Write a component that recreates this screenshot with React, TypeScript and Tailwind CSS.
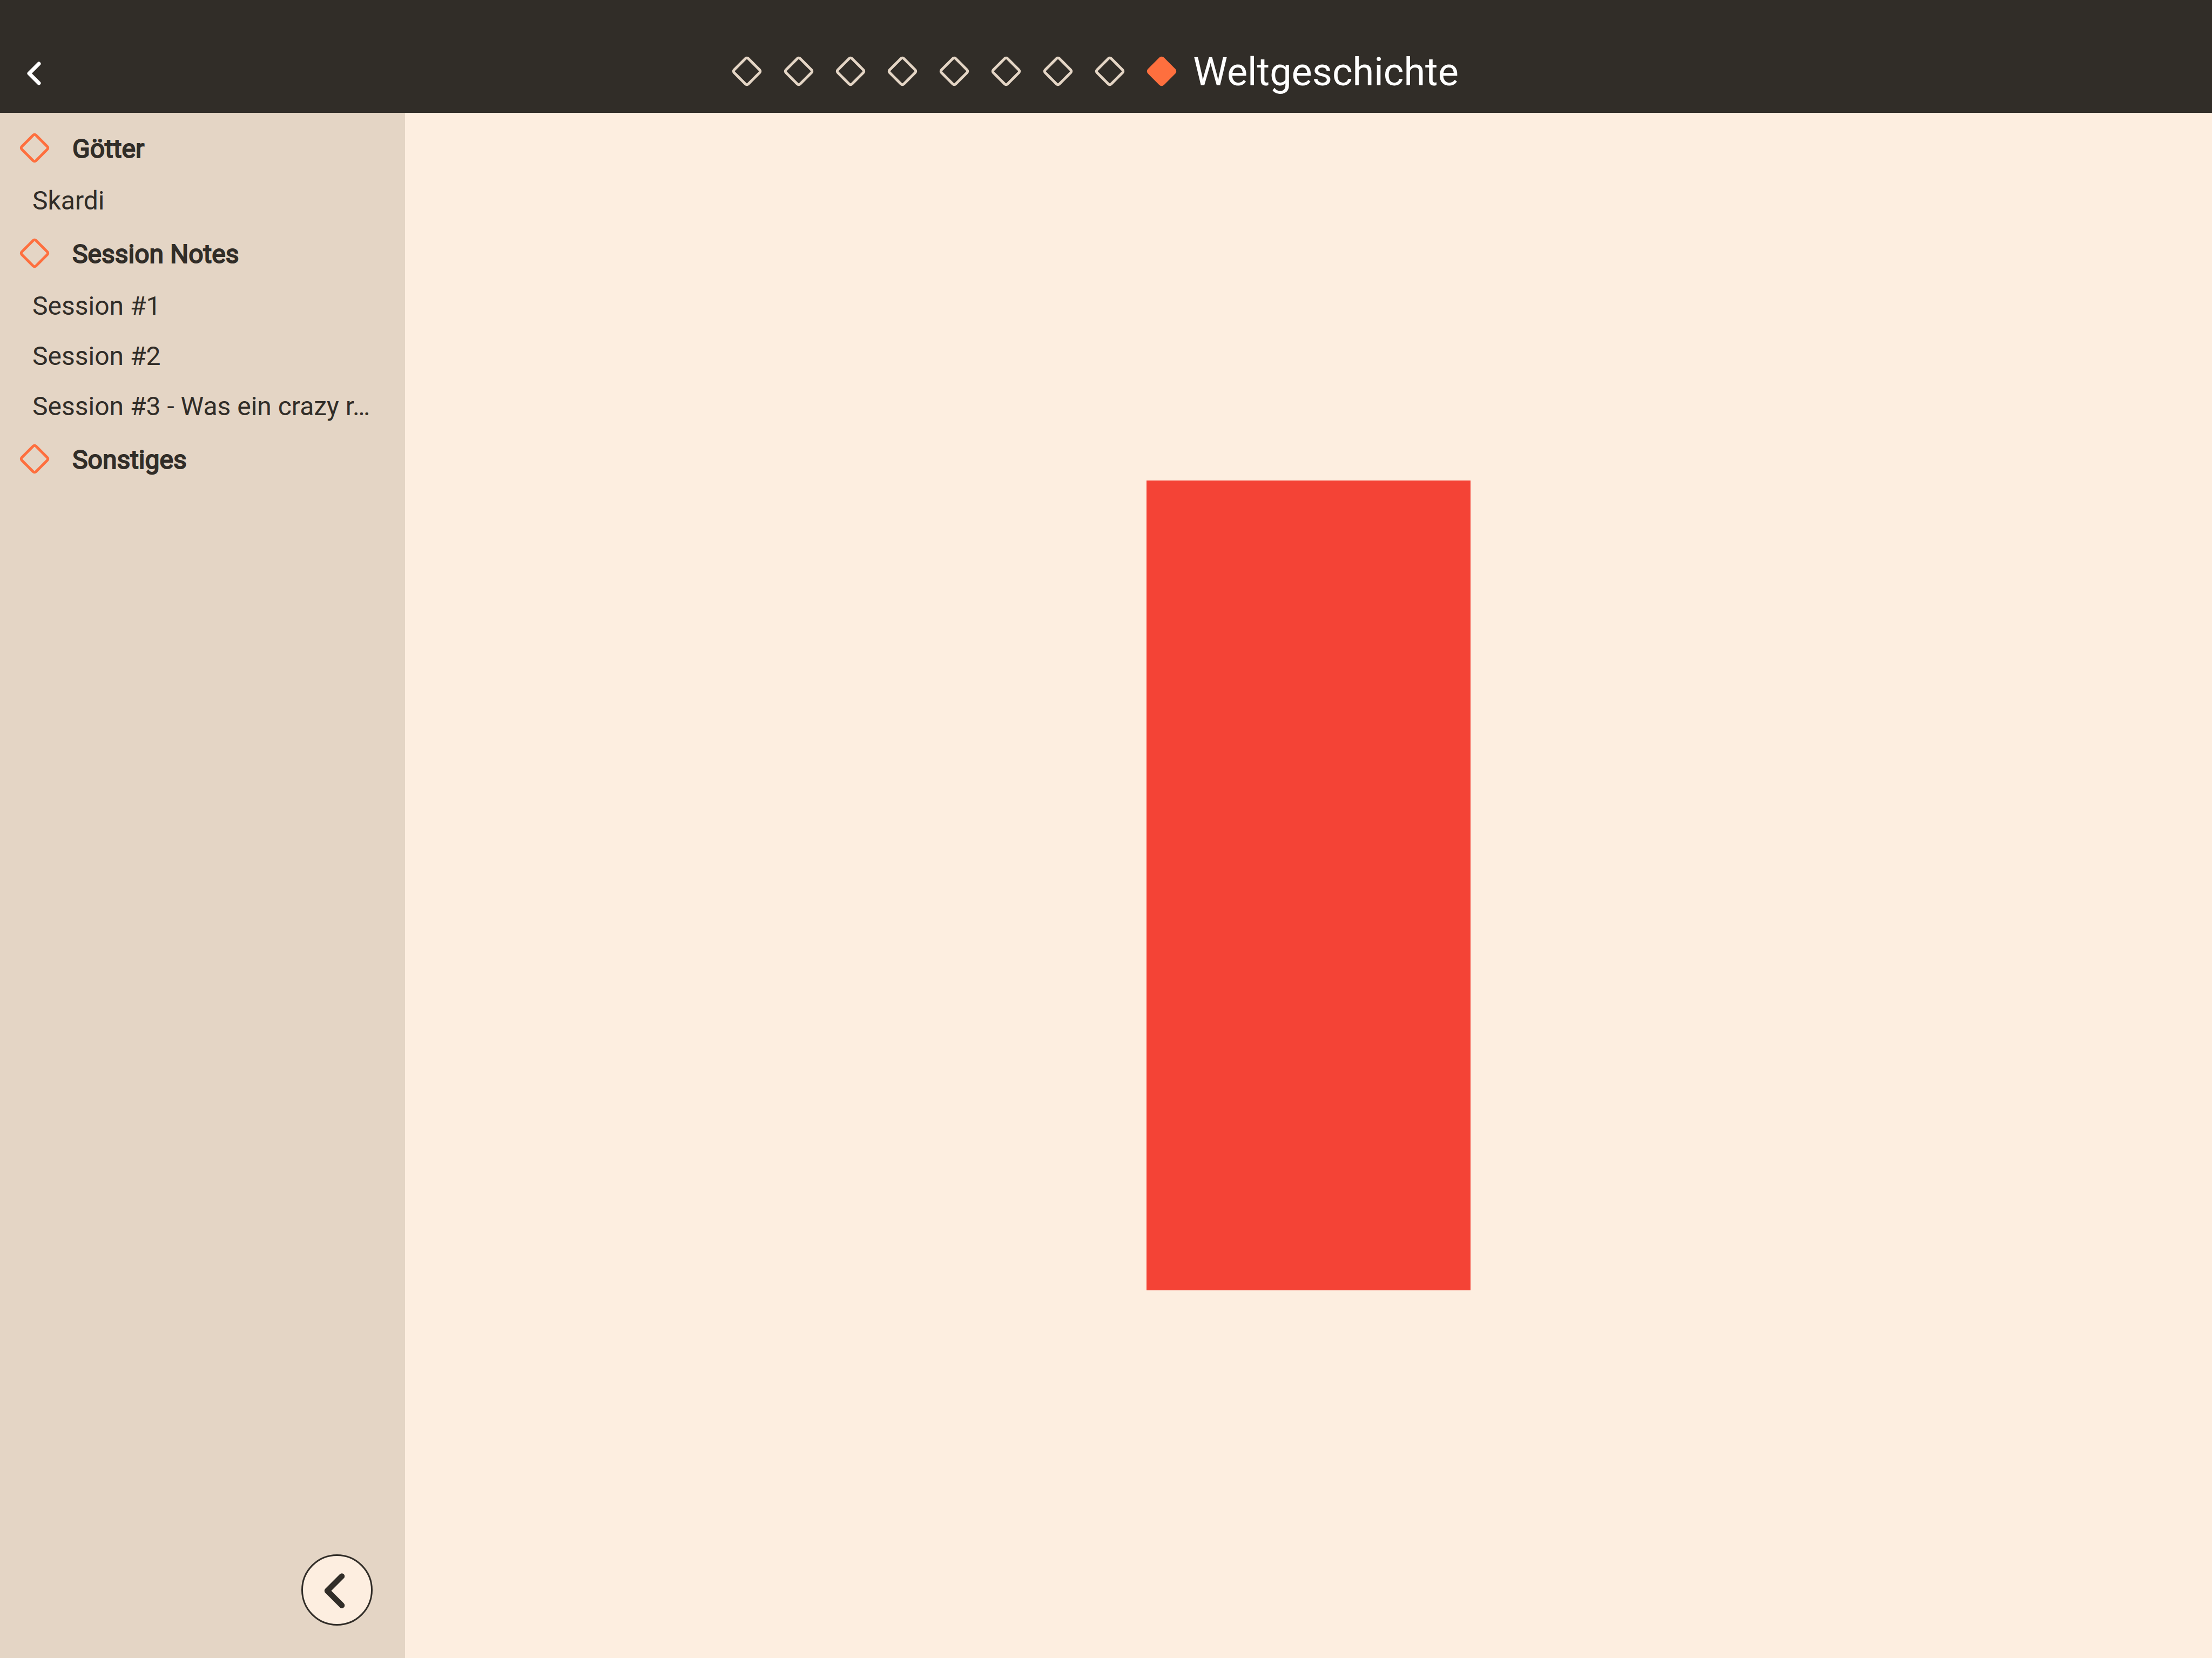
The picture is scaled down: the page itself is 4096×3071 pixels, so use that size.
import React from "react";

type DiamondProps = { className: string; filled?: boolean };

function Diamond({ className, filled = false }: DiamondProps) {
  return (
    <svg viewBox="0 0 96 96" className={className} aria-hidden="true">
      <rect
        x="29.5"
        y="29.5"
        width="37"
        height="37"
        rx="3.5"
        transform="rotate(45 48 48)"
        fill={filled ? "currentColor" : "none"}
        stroke="currentColor"
        strokeWidth="5"
      />
    </svg>
  );
}

type ChevronProps = { className: string };

function Chevron({ className }: ChevronProps) {
  return (
    <svg viewBox="0 0 72 72" className={className} aria-hidden="true">
      <path
        d="M42 19 L24 37 L42 55"
        fill="none"
        stroke="currentColor"
        strokeWidth="7"
        strokeLinecap="round"
        strokeLinejoin="round"
      />
    </svg>
  );
}

const steps = [1, 2, 3, 4, 5, 6, 7, 8];

const groups = [
  { title: "Götter", entries: ["Skardi"] },
  {
    title: "Session Notes",
    entries: ["Session #1", "Session #2", "Session #3 - Was ein crazy r…"],
  },
  { title: "Sonstiges", entries: [] },
];

export default function App() {
  return (
    <div className="flex min-h-screen flex-col bg-[#fdeee0] font-[Roboto,sans-serif] text-[#312d28]">
      <header className="grid h-[209px] grid-cols-[1fr_auto_1fr] items-center bg-[#312d28] pt-[54px] text-white">
        <button type="button" aria-label="Zurück" className="mt-1.5 ml-[30px] size-[72px]">
          <Chevron className="size-[72px]" />
        </button>
        <nav aria-label="Bereiche" className="flex items-center pr-[60px]">
          {steps.map((step) => (
            <button
              key={step}
              type="button"
              aria-label={`Bereich ${step}`}
              className="size-24 text-[#e4d5c5]"
            >
              <Diamond className="size-24" />
            </button>
          ))}
          <button
            type="button"
            aria-current="page"
            className="flex items-center gap-2.5"
          >
            <Diamond filled className="size-24 text-[#fe6f3e]" />
            <span className="pt-1 text-[72px] leading-[84px]">Weltgeschichte</span>
          </button>
        </nav>
      </header>
      <div className="flex flex-1">
        <aside className="flex w-[750px] shrink-0 flex-col justify-between bg-[#e4d5c5] pt-[14px]">
          <nav aria-label="Notizen" className="text-[48px]">
            {groups.map((group) => (
              <section key={group.title}>
                <h2 className="flex h-[102px] items-center gap-[22px] pl-4">
                  <Diamond className="size-24 text-[#fe6f3e]" />
                  <span className="pt-[3px] [-webkit-text-stroke:2px_#312d28]">
                    {group.title}
                  </span>
                </h2>
                <ul>
                  {group.entries.map((entry) => (
                    <li key={entry} className="h-[93px] px-[60px]">
                      <a href="#" className="block truncate leading-[93px]">
                        {entry}
                      </a>
                    </li>
                  ))}
                </ul>
              </section>
            ))}
          </nav>
          <button
            type="button"
            aria-label="Seitenleiste einklappen"
            className="mr-[60px] mb-[60px] flex size-[132px] items-center justify-center self-end rounded-full border-3 border-[#312d28] bg-[#fdeee0]"
          >
            <Chevron className="size-[108px]" />
          </button>
        </aside>
        <main className="flex flex-1 items-center justify-center">
          <div className="h-[1500px] w-[600px] bg-[#f44336]" />
        </main>
      </div>
    </div>
  );
}
